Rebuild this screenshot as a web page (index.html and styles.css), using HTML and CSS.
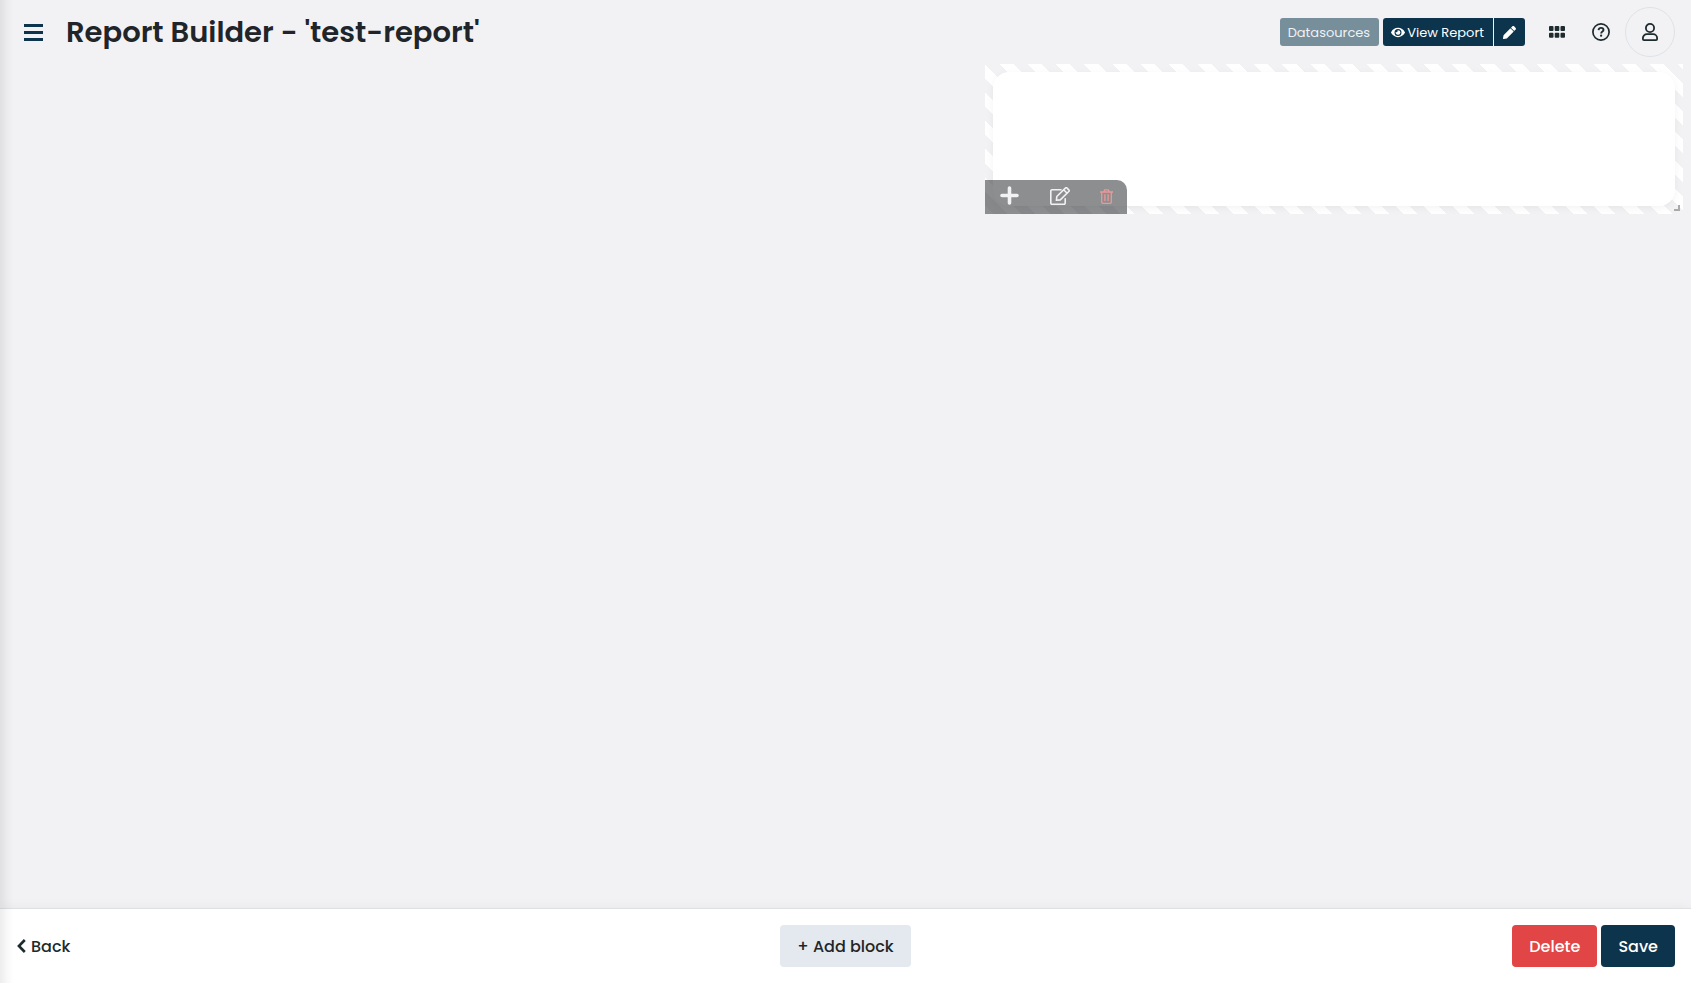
FILE: index.html
```html
<!DOCTYPE html>
<html lang="en">
<head>
<meta charset="utf-8">
<title>Report Builder</title>
<link rel="stylesheet" href="styles.css">
</head>
<body>
<header class="topbar">
  <button class="icon-btn menu" type="button" aria-label="Menu">
    <svg width="19" height="17" viewBox="0 0 19 17" fill="currentColor"><path d="M0 0h19v3H0zM0 7h19v3H0zM0 14h19v3H0z"/></svg>
  </button>
  <h1 class="title">Report Builder - 'test-report'</h1>
  <div class="actions">
    <button class="btn-sm muted" type="button">Datasources</button>
    <div class="group">
      <button class="btn-sm" type="button"><svg width="14" height="13" viewBox="0 0 576 512" fill="currentColor"><path d="M572.520 241.400C518.290 135.590 410.930 64 288 64S57.680 135.640 3.480 241.410a32.350 32.350 0 0 0 0 29.190C57.710 376.410 165.070 448 288 448s230.320-71.640 284.520-177.410a32.350 32.350 0 0 0 0-29.190zM288 400a144 144 0 1 1 144-144 143.930 143.930 0 0 1-144 144zm0-240a95.310 95.310 0 0 0-25.310 3.790 47.850 47.850 0 0 1-66.900 66.900A95.780 95.780 0 1 0 288 160z"/></svg>View Report</button>
      <button class="btn-sm pencil" type="button" aria-label="Edit report"><svg width="13" height="13" viewBox="0 0 512 512" fill="currentColor"><path d="M497.900 142.100l-46.100 46.100c-4.700 4.700-12.300 4.700-17 0l-111-111c-4.700-4.700-4.700-12.300 0-17l46.100-46.100c18.700-18.700 49.100-18.700 67.900 0l60.100 60.100c18.800 18.700 18.800 49.100 0 67.900zM284.200 99.800L21.600 362.400.400 483.900c-2.900 16.400 11.400 30.600 27.800 27.800l121.500-21.300 262.600-262.600c4.700-4.700 4.700-12.300 0-17l-111-111c-4.800-4.700-12.400-4.700-17.100 0z"/></svg></button>
    </div>
    <button class="icon-btn" type="button" aria-label="Apps">
      <svg width="16" height="12" viewBox="0 0 16 12" fill="currentColor"><rect width="4.500" height="5" rx="1"/><rect x="5.700" width="4.600" height="5" rx="1"/><rect x="11.500" width="4.500" height="5" rx="1"/><rect y="6.700" width="4.500" height="5" rx="1"/><rect x="5.700" y="6.700" width="4.600" height="5" rx="1"/><rect x="11.500" y="6.700" width="4.500" height="5" rx="1"/></svg>
    </button>
    <button class="icon-btn" type="button" aria-label="Help">
      <svg width="18" height="18" viewBox="0 0 18 18" fill="none" stroke="currentColor"><circle cx="9" cy="9" r="8.100" stroke-width="1.700"/><path d="M6.500 7.100C6.800 5.500 7.700 4.900 9 4.900c1.400 0 2.500.800 2.500 2 0 1.700-2.300 1.500-2.300 3.500" stroke-width="1.900"/><circle cx="9.100" cy="12.700" r="1.150" fill="currentColor" stroke="none"/></svg>
    </button>
    <button class="avatar" type="button" aria-label="Account">
      <svg width="16" height="18" viewBox="0 0 16 18" fill="none" stroke="currentColor" stroke-width="1.800"><circle cx="8" cy="5" r="4.100"/><path d="M4.900 11.100h6.200a4 4 0 0 1 4 4v.900a1.100 1.100 0 0 1-1.100 1.100H2a1.100 1.100 0 0 1-1.100-1.100v-.900a4 4 0 0 1 4-4z"/></svg>
    </button>
  </div>
</header>
<main class="canvas">
  <section class="block" aria-label="Report block">
    <div class="card"></div>
    <div class="tools">
      <button class="tool" type="button" aria-label="Add"><svg width="19" height="19" viewBox="0 0 19 19" fill="none" stroke="currentColor" stroke-width="3.600" stroke-linecap="round"><path d="M9.500 2v15M2 9.500h15"/></svg></button>
      <button class="tool edit" type="button" aria-label="Edit"><svg width="20" height="18" viewBox="0 0 20 18" fill="none" stroke="currentColor" stroke-width="1.600" stroke-linejoin="round" stroke-linecap="round"><path d="M11 2.800H2a1.200 1.200 0 0 0-1.200 1.200v12A1.200 1.200 0 0 0 2 17.200h12a1.200 1.200 0 0 0 1.200-1.200v-4.300M6.800 9.500L15.600.900Q16.200.500 16.800.900L19 3.100Q19.400 3.700 19 4.300l-8.700 8.600-3.900.400zM13.700 2.800l3.400 3.400"/></svg></button>
      <button class="tool remove" type="button" aria-label="Remove"><svg width="13" height="15" viewBox="0 0 13 15" fill="none" stroke="currentColor" stroke-width="1.300"><path d="M0 3h13M3.700 3l1-2.200h3.600l1 2.200M1.700 3v10.300q0 1 1 1h7.600q1 0 1-1V3M4.900 5.300v6.700M8.100 5.300v6.700"/></svg></button>
    </div>
    <span class="resize"></span>
  </section>
</main>
<footer class="footer">
  <a class="back" href="#"><svg width="9" height="14" viewBox="0 0 9 14" fill="none" stroke="currentColor" stroke-width="2.600"><path d="M7.800 1L1.900 7l5.900 6"/></svg>Back</a>
  <button class="btn light" type="button">+ Add block</button>
  <div class="right">
    <button class="btn danger" type="button">Delete</button>
    <button class="btn" type="button">Save</button>
  </div>
</footer>
<div class="edge"></div>
</body>
</html>
```
FILE: styles.css
```css
* { box-sizing: border-box; }
body {
  margin: 0;
  min-height: 100vh;
  display: flex;
  flex-direction: column;
  background: #f2f2f5;
  color: #212529;
  font-family: Poppins, Inter, "Open Sans", sans-serif;
  font-size: 16px;
}
button { font: inherit; border: 0; cursor: pointer; }
svg { display: block; flex: none; }
.topbar {
  display: flex;
  align-items: center;
  height: 64px;
  padding: 0 16px 0 11px;
}
.icon-btn {
  display: flex;
  align-items: center;
  justify-content: center;
  width: 44px;
  height: 40px;
  padding: 0;
  background: none;
  color: #1c2b2d;
}
.menu { color: #0c344d; }
.title {
  margin: 0 0 0 11px;
  flex: 1;
  font-size: 29px;
  line-height: 36px;
  font-weight: 600;
  white-space: nowrap;
}
.actions { display: flex; align-items: center; }
.btn-sm {
  display: flex;
  align-items: center;
  justify-content: center;
  gap: 2px;
  height: 28px;
  padding: 1px 9px 0 8px;
  border-radius: 3px;
  background: #0c344d;
  color: #fff;
  font-size: 13px;
  font-weight: 400;
  white-space: nowrap;
}
.muted { margin-right: 4px; background: #778e9b; color: #f0f2f4; }
.group { display: flex; gap: 1px; margin-right: 10px; }
.group .btn-sm:first-child { border-radius: 3px 0 0 3px; }
.group .pencil { border-radius: 0 3px 3px 0; padding: 0 9px; }
.avatar {
  display: flex;
  align-items: center;
  justify-content: center;
  width: 50px;
  height: 50px;
  margin-left: 2px;
  border: 1px solid #dee2e6;
  border-radius: 50%;
  background: none;
  color: #1c2b2d;
}
.canvas {
  flex: 1;
  display: grid;
  grid-template-columns: repeat(12, 1fr);
  align-content: start;
  padding: 0 8px;
}
.block {
  position: relative;
  grid-column: 8 / 13;
  height: 150px;
  padding: 8px;
  background: repeating-linear-gradient(45deg, #fff 0 6px, #f2f2f5 6px 16px, #fff 16px 20px);
}
.card {
  height: 100%;
  border-radius: 16px;
  background: #fff;
  box-shadow: 0 2px 8px rgba(0, 0, 0, .05);
}
.tools {
  position: absolute;
  left: 0;
  bottom: 0;
  display: flex;
  align-items: flex-start;
  width: 142px;
  height: 34px;
  border-radius: 0 10px 0 0;
  background: rgba(40, 42, 44, .53);
}
.tool {
  display: flex;
  align-items: center;
  justify-content: center;
  width: 49px;
  height: 31px;
  padding: 0;
  background: none;
  color: #f2f2f5;
}
.edit { width: 52px; }
.remove { width: 41px; height: 32px; color: #ea9999; }
.resize {
  position: absolute;
  right: 3px;
  bottom: 3px;
  width: 6px;
  height: 6px;
  border-right: 2px solid #aaa;
  border-bottom: 2px solid #aaa;
}
.footer {
  display: grid;
  grid-template-columns: 1fr auto 1fr;
  align-items: center;
  height: 75px;
  padding: 0 16px;
  border-top: 1px solid #dee0e2;
  background: #fff;
  box-shadow: 0 0 12px rgba(0, 0, 0, .05);
}
.back {
  display: flex;
  align-items: center;
  gap: 5px;
  padding-left: 1px;
  color: #1c2b2d;
  font-weight: 500;
  text-decoration: none;
}
.btn {
  height: 42px;
  padding: 0 17px;
  border-radius: 4px;
  background: #0c344d;
  color: #fff;
  font-weight: 500;
}
.light { background: #e4e8ef; color: #212529; }
.danger { background: #e24545; }
.right { display: flex; justify-content: flex-end; gap: 4px; }
.edge {
  position: fixed;
  top: 0;
  bottom: 0;
  left: 0;
  width: 14px;
  background: linear-gradient(90deg, rgba(0, 0, 0, .07), rgba(0, 0, 0, .02) 60%, rgba(0, 0, 0, 0));
  pointer-events: none;
}
```
